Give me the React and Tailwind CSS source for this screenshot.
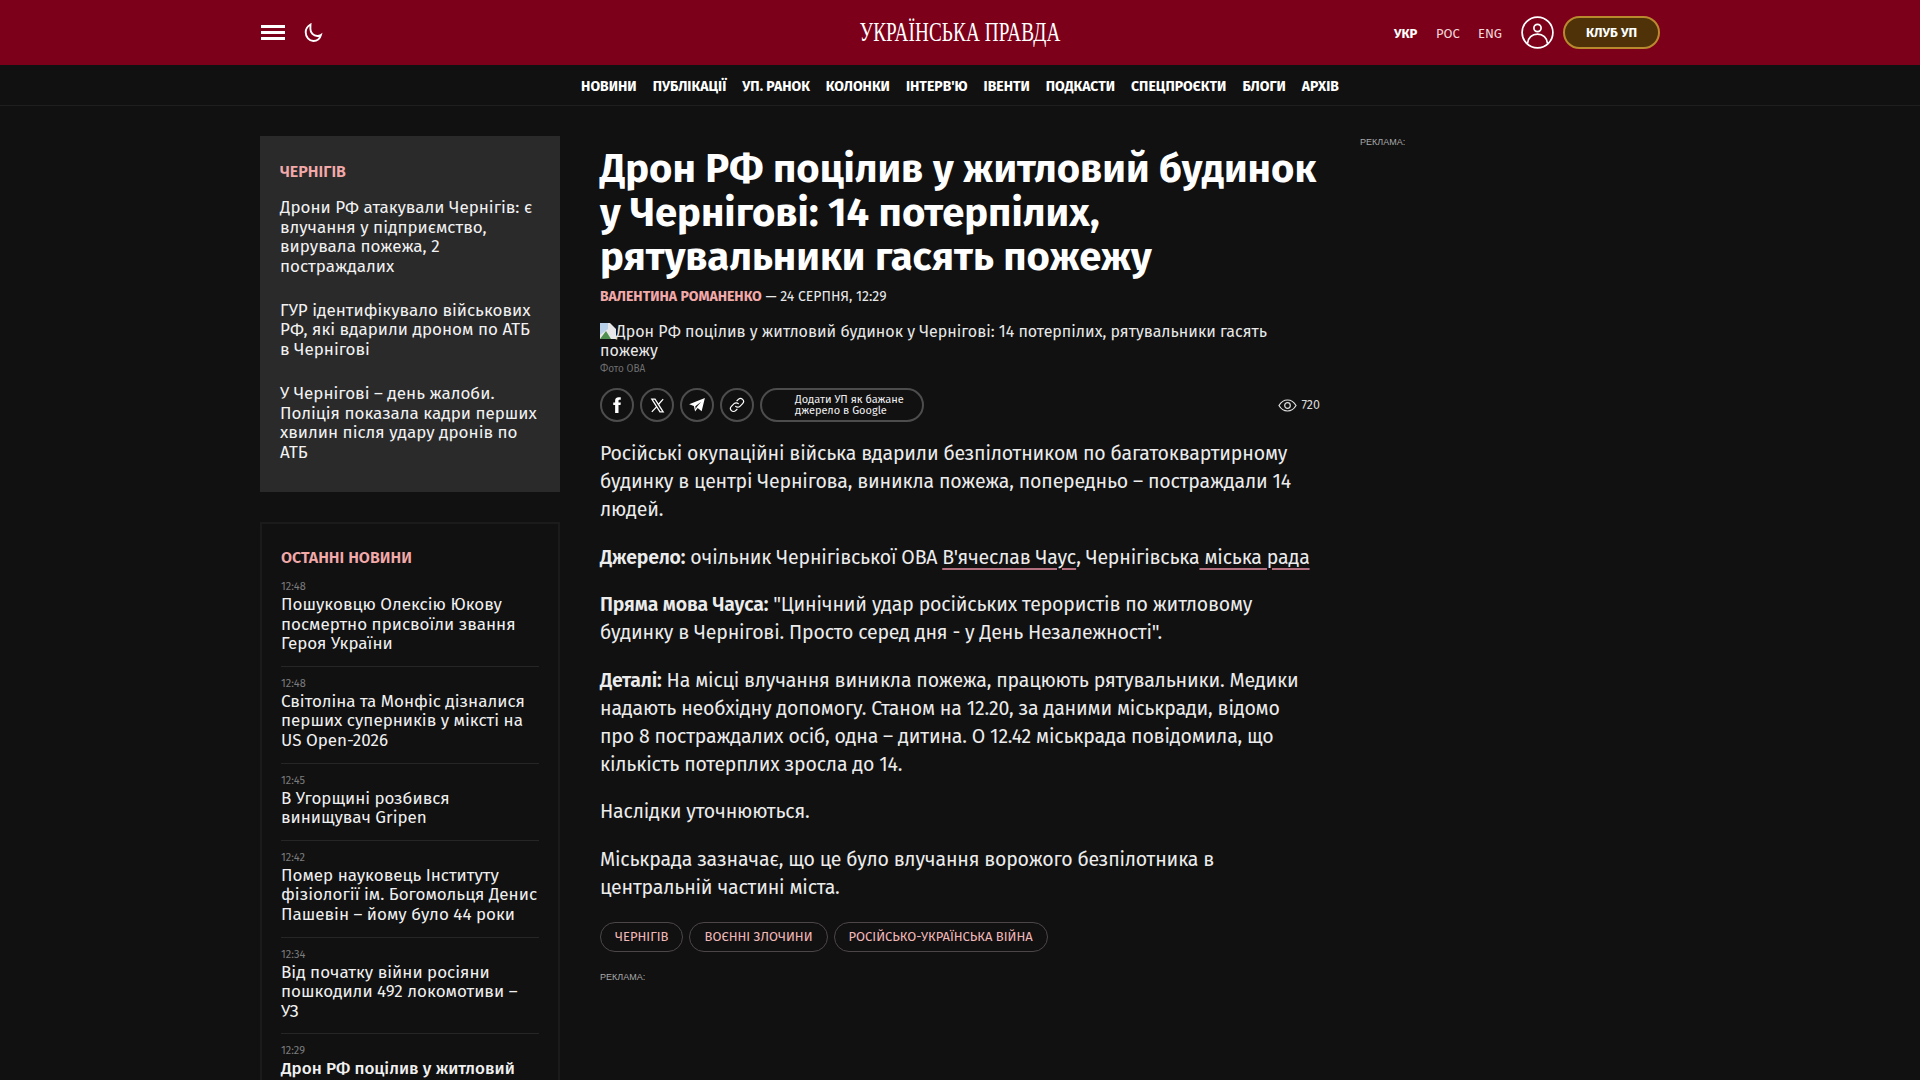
import React from "react";

const F = "font-['Fira_Sans','Open_Sans','Noto_Sans',sans-serif]";
const nav = ["НОВИНИ","ПУБЛІКАЦІЇ","УП. РАНОК","КОЛОНКИ","ІНТЕРВ'Ю","ІВЕНТИ","ПОДКАСТИ","СПЕЦПРОЄКТИ","БЛОГИ","АРХІВ"];
const top = [
  "Дрони РФ атакували Чернігів: є влучання у підприємство, вирувала пожежа, 2 постраждалих",
  "ГУР ідентифікувало військових РФ, які вдарили дроном по АТБ в Чернігові",
  "У Чернігові – день жалоби. Поліція показала кадри перших хвилин після удару дронів по АТБ",
];
const news = [
  ["12:48","Пошуковцю Олексію Юкову посмертно присвоїли звання Героя України"],
  ["12:48","Світоліна та Монфіс дізналися перших суперників у міксті на US Open-2026"],
  ["12:45","В Угорщині розбився винищувач Gripen"],
  ["12:42","Помер науковець Інституту фізіології ім. Богомольця Денис Пашевін – йому було 44 роки"],
  ["12:34","Від початку війни росіяни пошкодили 492 локомотиви – УЗ"],
  ["12:29","Дрон РФ поцілив у житловий будинок у Чернігові: 14 потерпілих"],
];

function Round({ children }) {
  return <div className="w-[34px] h-[34px] rounded-full border-2 border-[#4d4d4d] flex items-center justify-center text-white">{children}</div>;
}
function Lk({ children }) {
  return <a className="underline decoration-[#b5707f] underline-offset-4 decoration-[1.5px]">{children}</a>;
}

export default function App() {
  return (
    <div className={`h-[1080px] overflow-hidden bg-[#111112] text-[#f0f0f0] ${F}`}>
      <header className="h-[65px] bg-[#7d001b]">
        <div className="w-[1400px] mx-auto h-full flex items-center relative">
          <div className="flex flex-col gap-[3px] w-[24px] ml-[1px]">
            <span className="h-[3px] bg-white" /><span className="h-[3px] bg-white" /><span className="h-[3px] bg-white" />
          </div>
          <svg className="ml-[19px] mt-[1px]" width="19" height="20" viewBox="0 0 18 20" fill="none" stroke="white" strokeWidth="1.9"><path d="M6 1.5c-3 1.700-4.800 4.400-4.800 7.800 0 4.800 3.400 8.700 7.700 8.700 3.700 0 6.600-2.600 7.500-6-1 .7-2.300 1-3.600 1-3.900 0-6.900-3.200-6.900-7 0-1.600 0-3 .1-4.500Z"/></svg>
          <div className="absolute left-1/2 -translate-x-1/2 top-[18px] font-['Liberation_Serif',serif] text-[27px] leading-[29px] text-white whitespace-nowrap scale-x-[0.71] tracking-[0.2px]">УКРАЇНСЬКА ПРАВДА</div>
          <div className="ml-auto flex items-center font-stretch-condensed text-[13px] leading-[16px]">
            <span className="font-bold text-white mr-[15px] w-[27px] mt-[3px]">УКР</span>
            <span className="text-[#f0d8d8] mr-[14px] w-[28px] mt-[3px]">РОС</span>
            <span className="text-[#f0d8d8] mr-[16px] w-[27px] mt-[3px]">ENG</span>
            <svg className="mr-[9px]" width="33" height="33" viewBox="0 0 33 33" fill="none" stroke="white" strokeWidth="1.7"><circle cx="16.5" cy="16.5" r="15.4"/><circle cx="16.5" cy="12" r="3.6"/><path d="M6.500 27.500c.4-5.800 4.600-9.400 10-9.400s9.600 3.600 10 9.400"/></svg>
            <div className="w-[97px] h-[33px] rounded-full bg-[#4f3208] border-2 border-[#b9892e] flex items-center justify-center text-white font-bold text-[13px]">КЛУБ УП</div>
          </div>
        </div>
      </header>
      <nav className="h-[41px] border-b border-[#1f1f20] flex items-center justify-center gap-[16px] font-stretch-condensed font-bold text-[14px] text-white pt-[2px]">
        {nav.map(n => <span key={n} className="whitespace-nowrap">{n}</span>)}
      </nav>
      <div className="w-[1400px] mx-auto flex pt-[30px]">
        <aside className="w-[300px] shrink-0">
          <section className="bg-[#2a2a2b] px-[20px] pt-[26px] h-[356px]">
            <h3 className="text-[16px] leading-[20px] font-semibold text-[#f2a9a9]">ЧЕРНІГІВ</h3>
            <div className="mt-[16px] flex flex-col gap-[24.5px]">
              {top.map(t => <p key={t} className="text-[17px] leading-[19.6px] text-[#f2f2f2]">{t}</p>)}
            </div>
          </section>
          <section className="mt-[30px] border-2 border-[#1b1b1c] px-[19px] pt-[24px] pb-[20px] h-[600px]">
            <h3 className="text-[16px] leading-[20px] font-semibold text-[#f2a9a9]">ОСТАННІ НОВИНИ</h3>
            <div className="mt-[12px]">
              {news.map(([t, s], i) => (
                <div key={i} className={i ? "border-t border-[#262627] mt-[12px] pt-[10px]" : ""}>
                  <div className="text-[11px] leading-[14px] text-[#7c7c7c] font-stretch-condensed">{t}</div>
                  <p className={`text-[17px] leading-[19.6px] mt-[1px] text-[#f0f0f0] ${i === 5 ? "font-medium" : ""}`}>{s}</p>
                </div>
              ))}
            </div>
          </section>
        </aside>
        <main className="w-[720px] ml-[40px] shrink-0">
          <h1 className="text-[40px] leading-[44px] font-bold text-white mt-[11px] tracking-[0px]">Дрон РФ поцілив у житловий будинок у Чернігові: 14 потерпілих, рятувальники гасять пожежу</h1>
          <div className="mt-[8px] text-[14px] leading-[20px] font-stretch-condensed">
            <span className="font-bold text-[#f2a9a9]">ВАЛЕНТИНА РОМАНЕНКО</span><span className="text-[#e8e8e8]"> — 24 СЕРПНЯ, 12:29</span>
          </div>
          <div className="mt-[15px] text-[16px] leading-[19px] text-[#e8e8e8] font-stretch-condensed">
            <svg className="inline-block align-[-2px]" width="16" height="16" viewBox="0 0 16 16"><path d="M0 0h10l6 6v10H0Z" fill="#e8e8e8"/><path d="M0 16 6 8l5 8Z" fill="#4f8f4f"/><path d="M0 0h8v6L0 12Z" fill="#b8cfe8"/></svg>
            Дрон РФ поцілив у житловий будинок у Чернігові: 14 потерпілих, рятувальники гасять пожежу
          </div>
          <div className="mt-[3px] text-[10px] leading-[12px] text-[#6f6f6f] font-stretch-condensed">Фото ОВА</div>
          <div className="mt-[13px] flex items-center gap-[6px]">
            <Round><svg width="18" height="18" viewBox="0 0 24 24" fill="white"><path d="M14 8.500V6.400c0-.9.4-1.400 1.600-1.400H17V1.500h-2.800C10.900 1.500 9.500 3.600 9.500 6v2.500H7V12h2.500v10.500H14V12h2.700l.4-3.500Z"/></svg></Round>
            <Round><svg width="17" height="17" viewBox="0 0 24 24" fill="none" stroke="white" strokeWidth="1.8"><path d="M4 3h4.500L20 21h-4.500Z"/><path d="M20 3l-7 8M11 13.500 4 21"/></svg></Round>
            <Round><svg width="18" height="18" viewBox="0 0 24 24" fill="white"><path d="M22.500 2.500 1.500 11l6.300 2.300 1.700 7.200 3.400-4.400 5.300 4.200ZM9.800 13.700l7.700-6.200-5.900 7.200-1.400 3Z"/></svg></Round>
            <Round><svg width="16" height="16" viewBox="0 0 24 24" fill="none" stroke="white" strokeWidth="1.8" strokeLinecap="round"><path d="M10 14a4.500 4.500 0 0 0 6.400 0l4-4A4.500 4.500 0 0 0 14 3.600l-2 2"/><path d="M14 10a4.500 4.500 0 0 0-6.400 0l-4 4A4.500 4.500 0 0 0 10 20.400l2-2"/></svg></Round>
            <div className="w-[164px] h-[34px] rounded-full border-2 border-[#4d4d4d] flex items-center pl-[33px] text-[11px] leading-[11.5px] text-[#f0f0f0] font-stretch-condensed">Додати УП як бажане<br/>джерело в Google</div>
            <div className="ml-auto flex items-center gap-[4px] text-[12.5px] text-[#d8d8d8] font-stretch-condensed">
              <svg width="19" height="13" viewBox="0 0 19 13" fill="none" stroke="#e0e0e0" strokeWidth="1.2"><path d="M1 6.500C3 3 6 1 9.500 1s6.500 2 8.500 5.500C16 10 13 12 9.500 12S3 10 1 6.500Z"/><circle cx="9.500" cy="6.500" r="2.800"/></svg>
              720
            </div>
          </div>
          <div className="mt-[18px] pr-[6px] text-[19.5px] leading-[28px] text-[#ececec] tracking-[-0.17px]">
            <p>Російські окупаційні війська вдарили безпілотником по багатоквартирному будинку в центрі Чернігова, виникла пожежа, попередньо – постраждали 14 людей.</p>
            <p className="mt-[19.5px]"><b className="font-semibold">Джерело:</b> очільник Чернігівської ОВА <Lk>В'ячеслав Чаус</Lk>, Чернігівська<Lk> міська рада</Lk></p>
            <p className="mt-[19.5px]"><b className="font-semibold">Пряма мова Чауса:</b> "Цинічний удар російських терористів по житловому будинку в Чернігові. Просто серед дня - у День Незалежності".</p>
            <p className="mt-[19.5px]"><b className="font-semibold">Деталі:</b> На місці влучання виникла пожежа, працюють рятувальники. Медики надають необхідну допомогу. Станом на 12.20, за даними міськради, відомо про 8 постраждалих осіб, одна – дитина. О 12.42 міськрада повідомила, що кількість потерплих зросла до 14.</p>
            <p className="mt-[19.5px]">Наслідки уточнюються.</p>
            <p className="mt-[19.5px]">Міськрада зазначає, що це було влучання ворожого безпілотника в центральній частині міста.</p>
          </div>
          <div className="mt-[20px] flex gap-[6px] text-[13px] text-[#f2b9b9]">
            {["ЧЕРНІГІВ","ВОЄННІ ЗЛОЧИНИ","РОСІЙСЬКО-УКРАЇНСЬКА ВІЙНА"].map(t => (
              <span key={t} className="h-[30px] px-[14px] rounded-full border border-[#4d4647] flex items-center font-stretch-condensed">{t}</span>
            ))}
          </div>
          <div className="mt-[19px] font-['Liberation_Sans',sans-serif] text-[9px] leading-[12px] text-[#a8a8a8]">РЕКЛАМА:</div>
        </main>
        <div className="ml-[40px] font-['Liberation_Sans',sans-serif] text-[9px] leading-[12px] text-[#a8a8a8]">РЕКЛАМА:</div>
      </div>
    </div>
  );
}
